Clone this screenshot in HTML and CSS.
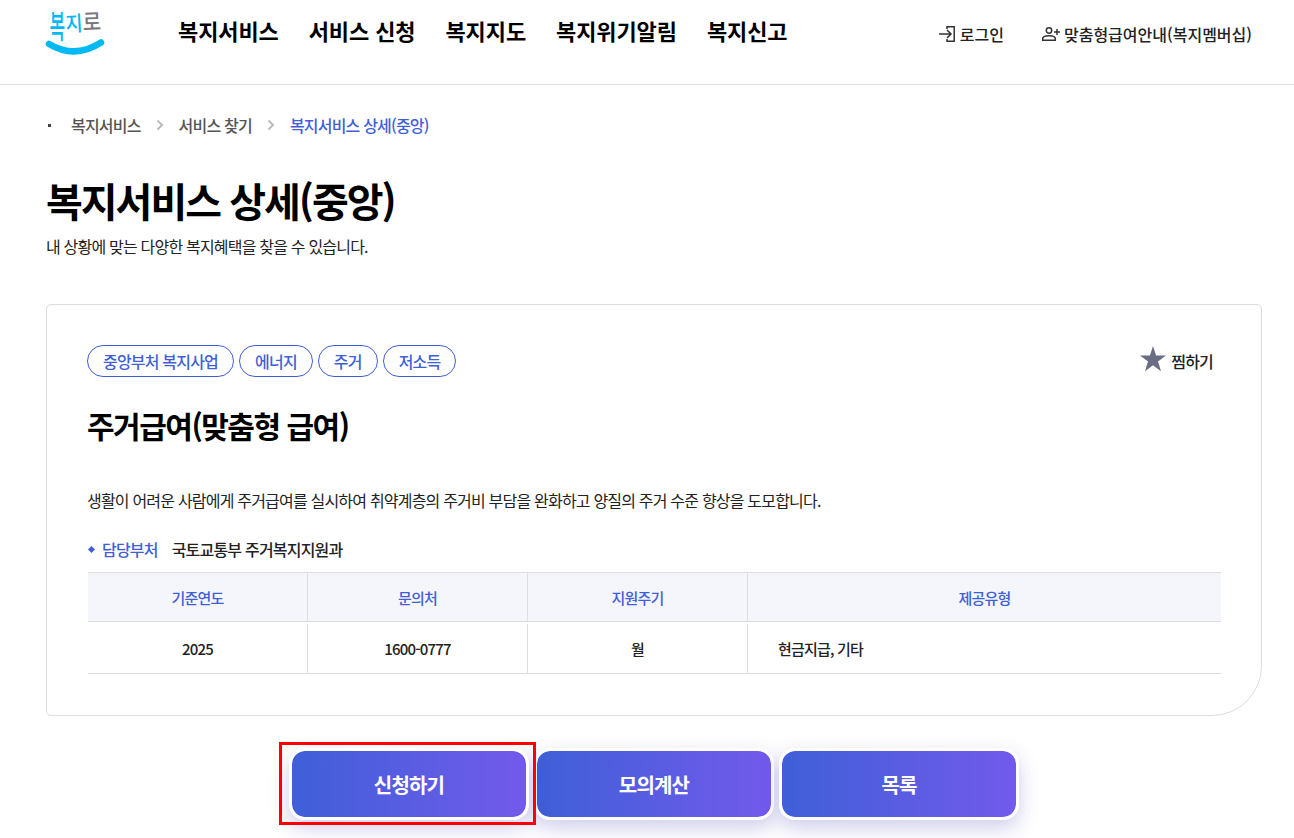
FILE: index.html
```
<!DOCTYPE html>
<html lang="ko">
<head>
	<meta charset="utf-8">
	<title>복지서비스 상세(중앙)</title>
	<link rel="stylesheet" href="styles.css">
</head>
<body>
	<header>
		<a href="#" class="logo">
			<svg width="60" height="56" viewBox="0 -4 60 56">
				<g class="logo_txt">
					<text transform="translate(3.500,34) scale(.85,1.600)">복</text>
					<text transform="translate(20,27.500) rotate(-3) scale(.92,1.050)">지</text>
					<text class="gray" transform="translate(37,26.500) rotate(-2) scale(1,1.150)">로</text>
				</g>
				<path d="M3 40Q29 55.500 55 38.500" fill="none" stroke="#00b9f2" stroke-width="6.500" stroke-linecap="round"/>
			</svg>
		</a>
		<ul class="nav">
			<li><a href="#">복지서비스</a></li>
			<li><a href="#">서비스 신청</a></li>
			<li><a href="#">복지지도</a></li>
			<li><a href="#">복지위기알림</a></li>
			<li><a href="#">복지신고</a></li>
		</ul>
		<ul class="util">
			<li>
				<a href="#">
					<svg width="18" height="18" viewBox="0 0 18 18" fill="none" stroke="#333" stroke-width="1.5">
						<path d="M8 4V1.700H15.200V16.200H8V14M0 9H12M8 5L12 9L8 13"/>
					</svg>
					로그인
				</a>
			</li>
			<li>
				<a href="#">
					<svg width="20" height="18" viewBox="0 0 20 18" fill="none" stroke="#333" stroke-width="1.500">
						<circle cx="8" cy="5.500" r="2.700"/>
						<path d="M1.700 15.300V13.800C1.700 11.800 5 10.800 8 10.800S14.300 11.800 14.300 13.800V15.300ZM16 4V10M13 7H19"/>
					</svg>
					맞춤형급여안내(복지멤버십)
				</a>
			</li>
		</ul>
	</header>

	<div class="container">
		<ul class="location">
			<li class="home"></li>
			<li>복지서비스</li>
			<li class="arrow"><svg width="8" height="12" viewBox="0 0 8 12"><path d="M1.500 1.500L6 6L1.500 10.500"/></svg></li>
			<li>서비스 찾기</li>
			<li class="arrow"><svg width="8" height="12" viewBox="0 0 8 12"><path d="M1.500 1.500L6 6L1.500 10.500"/></svg></li>
			<li class="on">복지서비스 상세(중앙)</li>
		</ul>

		<h1>복지서비스 상세(중앙)</h1>
		<p class="sub">내 상황에 맞는 다양한 복지혜택을 찾을 수 있습니다.</p>

		<div class="card">
			<div class="card_top">
				<div class="tags">
					<span>중앙부처 복지사업</span>
					<span>에너지</span>
					<span>주거</span>
					<span>저소득</span>
				</div>
				<a href="#" class="zzim">
					<svg width="26" height="26" viewBox="0 0 26 26"><path fill="#6b6d85" d="M13 0L16.100 9.500H26L18 15.500L21 25.200L13 19.300L5 25.200L8 15.500L0 9.500H9.900Z"/></svg>
					찜하기
				</a>
			</div>
			<h2>주거급여(맞춤형 급여)</h2>
			<p class="desc">생활이 어려운 사람에게 주거급여를 실시하여 취약계층의 주거비 부담을 완화하고 양질의 주거 수준 향상을 도모합니다.</p>
			<div class="dept">
				<strong>담당부처</strong>
				<span>국토교통부 주거복지지원과</span>
			</div>
			<table>
				<thead>
					<tr>
						<th class="col">기준연도</th>
						<th class="col">문의처</th>
						<th class="col">지원주기</th>
						<th>제공유형</th>
					</tr>
				</thead>
				<tbody>
					<tr>
						<td>2025</td>
						<td>1600-0777</td>
						<td>월</td>
						<td class="left">현금지급, 기타</td>
					</tr>
				</tbody>
			</table>
		</div>

		<div class="btn_box">
			<div class="pick"><a href="#" class="btn">신청하기</a></div>
			<a href="#" class="btn">모의계산</a>
			<a href="#" class="btn">목록</a>
		</div>
	</div>
</body>
</html>
```
FILE: styles.css
```
*{margin: 0; padding: 0; box-sizing: border-box;}
ul,li{list-style: none;}
a{color: inherit; text-decoration: none;}
body{height: 838px; overflow: hidden; background: #fff; color: #222; font: 500 16px/24px "Noto Sans CJK KR","Noto Sans KR",sans-serif; letter-spacing: -0.05em;}
svg{display: block; flex: none; overflow: visible;}

/*상단*/
header{display: flex; align-items: flex-start; height: 85px; padding: 0 42px 0 46px; border-bottom: 1px solid #ddd; letter-spacing: 0;}
.logo{width: 60px;}
.logo_txt{font-size: 20px; font-weight: 500; fill: #00b9f2;}
.logo_txt .gray{fill: #77787b;}
.nav{display: flex; gap: 30px; margin-left: 72px; padding-top: 14px; font-size: 22px; line-height: 32px; font-weight: 700; letter-spacing: -0.1px; color: #000;}
.util{display: flex; gap: 37px; margin-left: auto; padding-top: 22px;}
.util a{display: flex; gap: 3px;}
.util svg{margin-top: 3px;}

.container{padding: 0 32px 0 46px;}
.location{display: flex; align-items: center; height: 24px; margin-top: 28px; color: #555;}
.home{width: 3px; height: 3px; margin: 0 20px 0 2px; background: #444;}
.arrow{margin: 0 15px;}
.arrow path{fill: none; stroke: #bbb; stroke-width: 2;}
.location .on{color: #3f5fd7;}
h1{margin-top: 34px; font-size: 40px; line-height: 58px; font-weight: 700; letter-spacing: -0.05em; color: #000;}
.sub{margin-top: 5px; font-weight: 400;}

/*서비스 내용*/
.card{height: 412px; margin-top: 46px; padding: 40px; border: 1px solid #ddd; border-radius: 5px 5px 50px 5px;}
.card_top{display: flex; justify-content: space-between;}
.tags{display: flex; gap: 5px;}
.tags span{height: 32px; padding: 0 15px; border: 1px solid #3f5fd7; border-radius: 16px; line-height: 31px; color: #3f5fd7;}
.zzim{display: flex; gap: 5px; margin-right: 8px; line-height: 32px;}
.zzim svg{margin-top: 1px;}
h2{margin-top: 26px; font-size: 30px; line-height: 44px; font-weight: 700; letter-spacing: -0.05em; color: #000;}
.desc{margin-top: 41px; font-weight: 400;}
.dept{display: flex; align-items: center; margin: 25px 0 9px;}
.dept:before{content: ""; width: 5px; height: 5px; margin: 0 8px 0 2px; background: #3f5fd7; transform: rotate(45deg);}
.dept strong{margin-right: 14px; font-weight: 500; color: #3f5fd7;}
table{width: 1133px; margin-left: 1px; border-collapse: separate; border-spacing: 0 2px; table-layout: fixed; font-size: 15px; text-align: center;}
.col{width: 220px;}
th{height: 50px; padding-top: 1px; border-top: 1px solid #ddd; border-bottom: 1px solid #ddd; border-right: 1px solid #ddd; background: #f5f6fb; font-weight: 500; color: #3f5fd7;}
td{height: 50px; border-bottom: 1px solid #ddd; border-right: 1px solid #ddd;}
th:last-child,td:last-child{border-right: 0;}
.left{padding-left: 30px; text-align: left;}

/*버튼*/
.btn_box{display: flex; justify-content: center; gap: 5px; margin-top: 32px;}
.btn{display: block; width: 240px; height: 72px; border: 3px solid #fff; border-radius: 16px; background: linear-gradient(90deg,#3f5fd7,#735aec) padding-box; box-shadow: 0 8px 20px rgba(60,60,180,.25); font-size: 20px; font-weight: 700; line-height: 67px; text-align: center; color: #fff;}
.pick{position: relative;}
.pick:after{content: ""; position: absolute; left: -10px; top: -6px; z-index: 1; box-sizing: border-box; width: 257px; height: 83px; border: 3px solid #f00;}
```
